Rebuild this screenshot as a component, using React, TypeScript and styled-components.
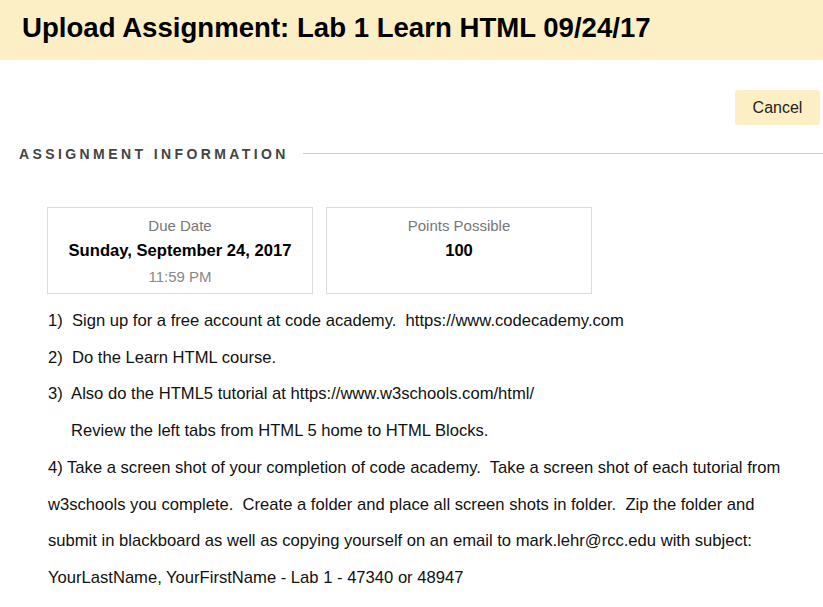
import styled, { createGlobalStyle } from 'styled-components';

const GlobalStyle = createGlobalStyle`
  body {
    margin: 0;
    background: #fff;
    font-family: "Liberation Sans", Arial, sans-serif;
    color: #000;
  }
`

const Header = styled.div`
  background-color: #fdefc5;
  height: 60px;
  padding: 0 22px;
  display: flex;
  align-items: center;
`

const Title = styled.h1`
  margin: 0;
  font-size: 27.6px;
  font-weight: bold;
  color: #000;
  padding-bottom: 4px;
`

const Actions = styled.div`
  display: flex;
  justify-content: flex-end;
  padding: 30px 3px 0 0;
`

const CancelButton = styled.button`
  background-color: #fdefc5;
  border: none;
  border-radius: 3px;
  width: 85px;
  height: 35px;
  font-family: "Liberation Sans", Arial, sans-serif;
  font-size: 16px;
  color: #222;
`

const SectionHead = styled.div`
  display: flex;
  align-items: center;
  gap: 14px;
  padding: 21px 0 0 19px;
`

const SectionTitle = styled.h2`
  margin: 0;
  font-size: 14px;
  font-weight: bold;
  letter-spacing: 3.4px;
  color: #444;
  white-space: nowrap;
`

const Rule = styled.div`
  flex: 1;
  height: 1px;
  background-color: #cfcfcf;
  margin-top: -2px;
`

const Cards = styled.div`
  display: flex;
  gap: 13px;
  padding: 45px 0 0 47px;
`

const Card = styled.div`
  width: 264px;
  height: 76px;
  border: 1px solid #dcdcdc;
  display: flex;
  flex-direction: column;
  align-items: center;
  padding-top: 9px;
  box-sizing: content-box;
`

const CardLabel = styled.div`
  font-size: 15px;
  color: #777;
  line-height: 18px;
`

const CardValue = styled.div`
  font-size: 16.6px;
  font-weight: bold;
  color: #000;
  line-height: 18px;
  margin-top: 7px;
`

const CardSub = styled.div`
  font-size: 15px;
  color: #888;
  line-height: 18px;
  margin-top: 8px;
`

const Steps = styled.div`
  padding: 9px 10px 0 48px;
`

const Step = styled.p<{ $indent?: boolean }>`
  margin: 0;
  font-size: 16.6px;
  line-height: 36.7px;
  color: #111;
  white-space: pre;
  padding-left: ${p => (p.$indent ? '23px' : '0')};
`

function App() {
  return (
    <>
      <GlobalStyle />
      <Header>
        <Title>Upload Assignment: Lab 1 Learn HTML 09/24/17</Title>
      </Header>
      <Actions>
        <CancelButton>Cancel</CancelButton>
      </Actions>
      <SectionHead>
        <SectionTitle>ASSIGNMENT INFORMATION</SectionTitle>
        <Rule />
      </SectionHead>
      <Cards>
        <Card>
          <CardLabel>Due Date</CardLabel>
          <CardValue>Sunday, September 24, 2017</CardValue>
          <CardSub>11:59 PM</CardSub>
        </Card>
        <Card>
          <CardLabel>Points Possible</CardLabel>
          <CardValue>100</CardValue>
        </Card>
      </Cards>
      <Steps>
        <Step>1)  Sign up for a free account at code academy.  https://www.codecademy.com</Step>
        <Step>2)  Do the Learn HTML course.</Step>
        <Step>3)  Also do the HTML5 tutorial at https://www.w3schools.com/html/</Step>
        <Step $indent>Review the left tabs from HTML 5 home to HTML Blocks.</Step>
        <Step>4) Take a screen shot of your completion of code academy.  Take a screen shot of each tutorial from</Step>
        <Step>w3schools you complete.  Create a folder and place all screen shots in folder.  Zip the folder and</Step>
        <Step>submit in blackboard as well as copying yourself on an email to mark.lehr@rcc.edu with subject:</Step>
        <Step>YourLastName, YourFirstName - Lab 1 - 47340 or 48947</Step>
      </Steps>
    </>
  );
}

export default App;
